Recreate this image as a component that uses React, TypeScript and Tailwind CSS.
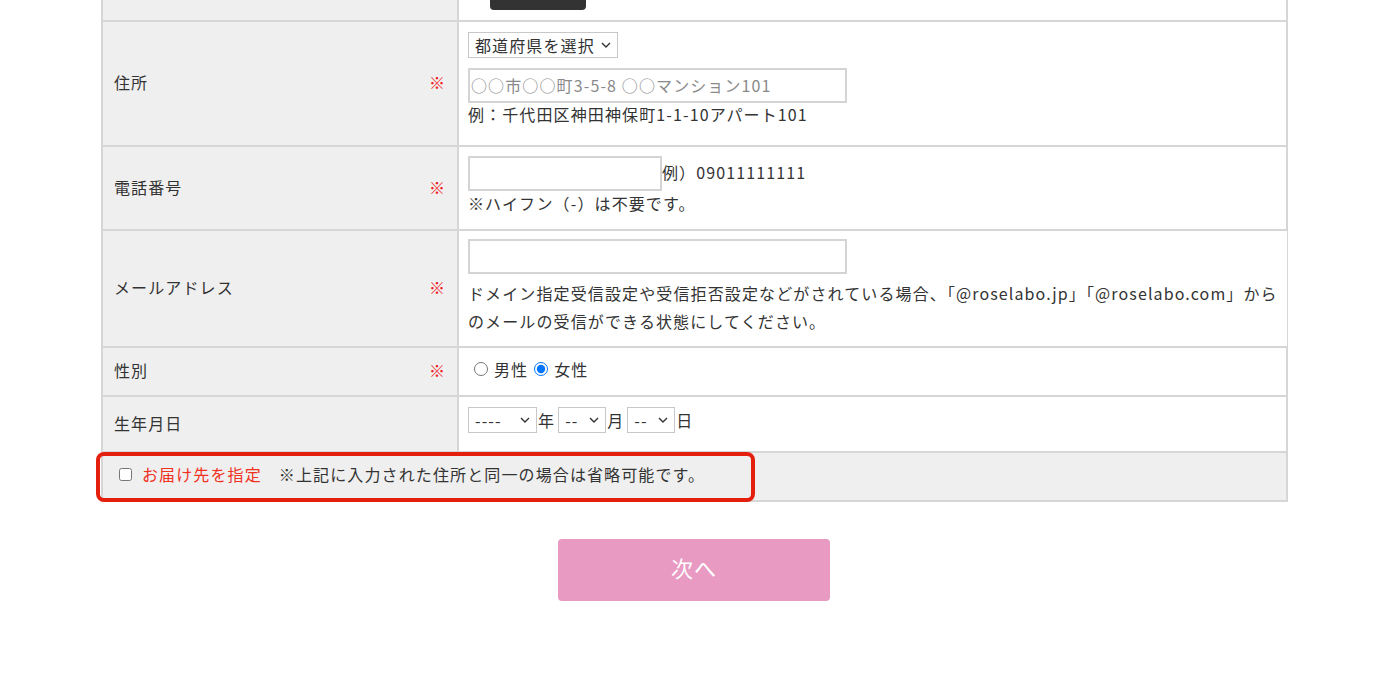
import React from "react";

const FONT = "font-['Noto_Sans_CJK_JP','Noto_Sans',sans-serif]";

function Chevron() {
  return (
    <svg width="10" height="6" viewBox="0 0 10 6" className="ml-[6px] shrink-0">
      <path d="M1 1l4 4 4-4" fill="none" stroke="#333" strokeWidth="1.4" />
    </svg>
  );
}

function FakeSelect({ label, width }: { label: string; width: string }) {
  return (
    <div
      className={`flex h-[26px] items-center justify-between border border-[#c8c8c8] bg-white pl-[6px] pr-[6px] text-[16px] leading-none text-[#333] ${width}`}
    >
      <span>{label}</span>
      <Chevron />
    </div>
  );
}

function Row({
  label,
  required,
  children,
  className,
}: {
  label: string;
  required?: boolean;
  children: React.ReactNode;
  className?: string;
}) {
  return (
    <div className={`flex border-b-2 border-[#d6d6d6] ${className ?? ""}`}>
      <div className="flex w-[356px] shrink-0 items-center justify-between border-r-2 border-[#d6d6d6] bg-[#efefef] pb-[3px] pl-[11px] pr-[11px]">
        <span>{label}</span>
        {required && <span className="text-[#f01a1a]">※</span>}
      </div>
      <div className="flex-1 bg-white px-[9px]">{children}</div>
    </div>
  );
}

export default function App() {
  return (
    <div className={`min-h-[700px] bg-white text-[16px] leading-[28px] tracking-[0.07em] text-[#333] ${FONT}`}>
      <div className="relative ml-[101px] w-[1187px] border-x-2 border-[#d6d6d6]">
        {/* top row, cut off by the viewport */}
        <div className="flex h-[22px] border-b-2 border-[#d6d6d6]">
          <div className="w-[356px] shrink-0 border-r-2 border-[#d6d6d6] bg-[#efefef]" />
          <div className="flex-1 bg-white">
            <div className="ml-[31px] h-[10px] w-[96px] rounded-b-[4px] bg-[#333]" />
          </div>
        </div>

        <Row label="住所" required className="h-[125px]">
          <div className="pt-[10px]">
            <div className="flex h-[26px] w-fit items-center border border-[#c8c8c8] bg-white pl-[6px] pr-[6px] leading-none">
              <span>都道府県を選択</span>
              <Chevron />
            </div>
            <div className="mt-[10px] flex h-[35px] w-[379px] items-center border-2 border-[#d4d4d4] pb-[2px] pl-[1px] text-[#8a8a8a]">
              ○○市○○町3-5-8 ○○マンション101
            </div>
            <div className="-mt-[3px]">例：千代田区神田神保町1-1-10アパート101</div>
          </div>
        </Row>

        <Row label="電話番号" required className="h-[84px]">
          <div className="pt-[9px]">
            <div className="flex items-center">
              <div className="h-[35px] w-[194px] border-2 border-[#d4d4d4]" />
              <span className="pb-[4px]">例）09011111111</span>
            </div>
            <div className="-mt-[2px]">※ハイフン（-）は不要です。</div>
          </div>
        </Row>

        <Row label="メールアドレス" required className="h-[117px]">
          <div className="pt-[8px]">
            <div className="h-[35px] w-[379px] border-2 border-[#d4d4d4]" />
            <div className="mt-[5px] whitespace-nowrap">
              ドメイン指定受信設定や受信拒否設定などがされている場合、「@roselabo.jp」「@roselabo.com」から
            </div>
            <div>のメールの受信ができる状態にしてください。</div>
          </div>
        </Row>

        <Row label="性別" required className="h-[49px]">
          <div className="flex h-full items-center pb-[6px]">
            <input type="radio" name="sex" className="m-0 ml-[6px] h-[14px] w-[14px] accent-[#0075ff]" />
            <span className="ml-[6px]">男性</span>
            <input type="radio" name="sex" defaultChecked className="m-0 ml-[6px] h-[14px] w-[14px] accent-[#0075ff]" />
            <span className="ml-[6px]">女性</span>
          </div>
        </Row>

        <Row label="生年月日" className="h-[56px]">
          <div className="flex h-full items-center pb-[8px]">
            <FakeSelect label="----" width="w-[69px]" />
            <span className="ml-[1px] mr-[3px]">年</span>
            <FakeSelect label="--" width="w-[48px]" />
            <span className="ml-[1px] mr-[3px]">月</span>
            <FakeSelect label="--" width="w-[48px]" />
            <span className="ml-[1px]">日</span>
          </div>
        </Row>

        <div className="flex h-[49px] items-center border-b-2 border-[#d6d6d6] bg-[#efefef] pb-[5px] pl-[16px]">
          <input type="checkbox" className="m-0 h-[13px] w-[13px]" />
          <span className="ml-[10px] text-[#f0311f]">お届け先を指定</span>
          <span className="ml-[17px]">※上記に入力された住所と同一の場合は省略可能です。</span>
        </div>

        {/* red highlight annotation */}
        <div className="pointer-events-none absolute bottom-[0px] left-[-7px] h-[50px] w-[659px] rounded-[8px] border-[4px] border-[#e51f0d]" />
      </div>

      <div className="mt-[37px] flex justify-center">
        <button className="ml-[-12px] h-[62px] w-[272px] rounded-[4px] bg-[#e89ac2] pb-[6px] text-[22px] leading-none text-white">
          次へ
        </button>
      </div>
    </div>
  );
}
